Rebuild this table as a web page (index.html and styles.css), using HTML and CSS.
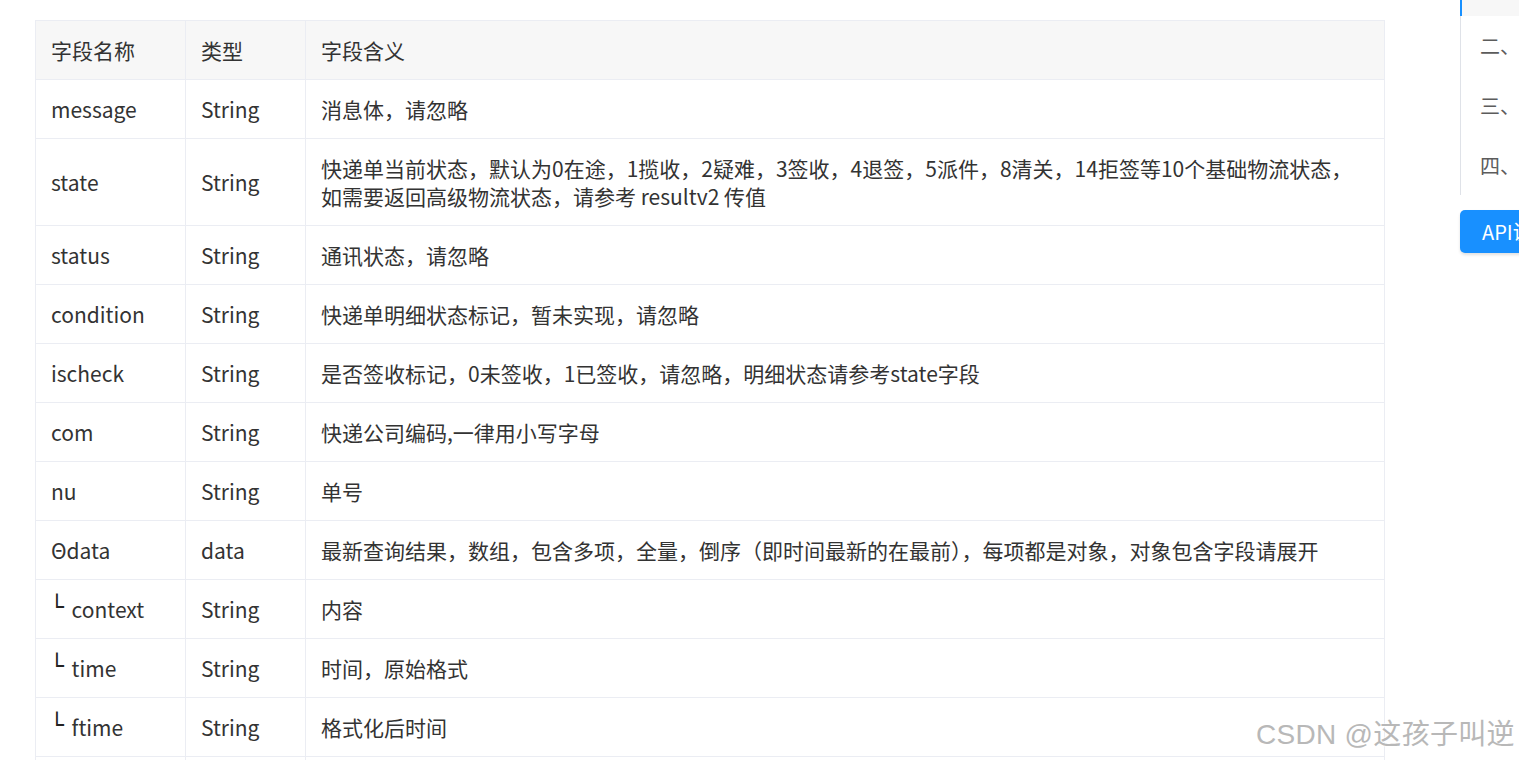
FILE: index.html
```html
<!DOCTYPE html>
<html lang="zh-CN">
<head>
<meta charset="utf-8">
<title>字段说明</title>
<link rel="stylesheet" href="styles.css">
</head>
<body>
<div class="page">
  <main class="content">
    <table class="fields">
      <colgroup>
        <col class="c1"><col class="c2"><col class="c3">
      </colgroup>
      <thead>
        <tr><th>字段名称</th><th>类型</th><th>字段含义</th></tr>
      </thead>
      <tbody>
        <tr><td>message</td><td>String</td><td>消息体，请忽略</td></tr>
        <tr><td>state</td><td>String</td><td>快递单当前状态，默认为0在途，1揽收，2疑难，3签收，4退签，5派件，8清关，14拒签等10个基础物流状态，如需要返回高级物流状态，请参考 resultv2 传值</td></tr>
        <tr><td>status</td><td>String</td><td>通讯状态，请忽略</td></tr>
        <tr><td>condition</td><td>String</td><td>快递单明细状态标记，暂未实现，请忽略</td></tr>
        <tr><td>ischeck</td><td>String</td><td>是否签收标记，0未签收，1已签收，请忽略，明细状态请参考state字段</td></tr>
        <tr><td>com</td><td>String</td><td>快递公司编码,一律用小写字母</td></tr>
        <tr><td>nu</td><td>String</td><td>单号</td></tr>
        <tr><td>Θdata</td><td>data</td><td>最新查询结果，数组，包含多项，全量，倒序（即时间最新的在最前），每项都是对象，对象包含字段请展开</td></tr>
        <tr><td><span class="sub">└</span> context</td><td>String</td><td>内容</td></tr>
        <tr><td><span class="sub">└</span> time</td><td>String</td><td>时间，原始格式</td></tr>
        <tr><td><span class="sub">└</span> ftime</td><td>String</td><td>格式化后时间</td></tr>
        <tr><td>&nbsp;</td><td>&nbsp;</td><td>&nbsp;</td></tr>
      </tbody>
    </table>
  </main>
  <aside class="side">
    <nav class="toc">
      <div class="toc-active"></div>
      <div class="toc-item">二、快递查询接口</div>
      <div class="toc-item">三、参数说明</div>
      <div class="toc-item">四、返回示例</div>
    </nav>
    <div class="api-btn">API调试工具</div>
  </aside>
</div>
<div class="watermark">CSDN @这孩子叫逆</div>
</body>
</html>
```

FILE: styles.css
```css
html, body {
  margin: 0;
  padding: 0;
  background: #fff;
  overflow: hidden;
  height: 760px;
}
body {
  font-family: "Noto Sans CJK SC", "Noto Sans", sans-serif;
  color: #333;
}
.page {
  display: flex;
  align-items: flex-start;
  width: 1700px;
}
.content {
  padding: 20px 0 0 35px;
  width: 1349px;
  flex: none;
}
.fields {
  border-collapse: collapse;
  width: 1349px;
  table-layout: fixed;
  font-size: 21px;
  line-height: 28px;
}
.c1 { width: 150px; }
.c2 { width: 120px; }
.c3 { width: 1079px; }
.fields th, .fields td {
  border: 1px solid #ebedf3;
  padding: 15px;
  height: 28px;
  text-align: left;
  vertical-align: middle;
  font-weight: normal;
  white-space: normal;
}
.fields thead th {
  background: #f7f7f7;
}
.sub {
  display: inline-block;
  font-family: "DejaVu Sans Mono", monospace;
  font-size: 23px;
  line-height: 0;
  vertical-align: 3px;
  margin-left: -1px;
  margin-right: 3px;
  color: #222;
}
.side {
  margin-left: 76px;
  flex: none;
  width: 260px;
}
.toc {
  border-left: 1px solid #dfe2e8;
  width: 240px;
}
.toc-active {
  height: 16px;
  background: #f7f7f7;
  border-left: 2px solid #1890ff;
  margin-left: -1px;
}
.toc-item {
  height: 60px;
  line-height: 60px;
  padding-left: 19px;
  font-size: 20px;
  color: #5c5c5c;
  white-space: nowrap;
}
.toc-item:last-child {
  height: 59px;
}
.api-btn {
  margin-top: 15px;
  height: 43px;
  line-height: 43px;
  width: 220px;
  background: #1890ff;
  color: #fff;
  border-radius: 5px;
  padding-left: 22px;
  font-size: 20px;
  box-shadow: 0 2px 3px rgba(0,0,0,0.12);
  white-space: nowrap;
}
.watermark {
  position: absolute;
  left: 1256px;
  top: 712px;
  font-family: "Liberation Sans", "Noto Sans CJK SC", sans-serif;
  font-size: 28px;
  letter-spacing: 0.3px;
  color: #b8b8b8;
  text-shadow: 1px 1px 1px #fff, -1px -1px 0 rgba(255,255,255,0.6);
  white-space: nowrap;
}
```
